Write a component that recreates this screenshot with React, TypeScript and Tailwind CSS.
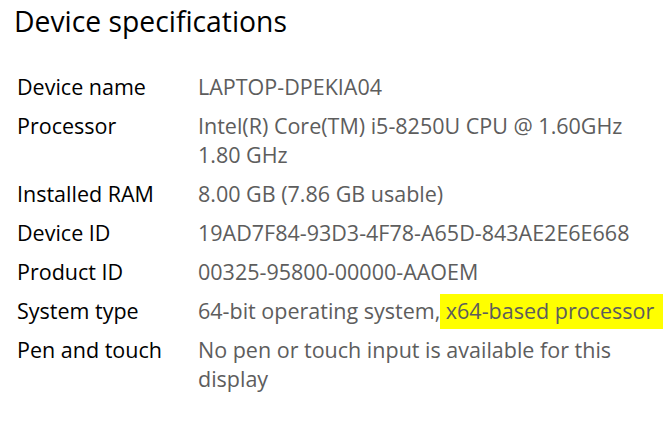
const specs: { label: string; lines: React.ReactNode[] }[] = [
  { label: 'Device name', lines: ['LAPTOP-DPEKIA04'] },
  { label: 'Processor', lines: ['Intel(R) Core(TM) i5-8250U CPU @ 1.60GHz', '1.80 GHz'] },
  { label: 'Installed RAM', lines: ['8.00 GB (7.86 GB usable)'] },
  { label: 'Device ID', lines: ['19AD7F84-93D3-4F78-A65D-843AE2E6E668'] },
  { label: 'Product ID', lines: ['00325-95800-00000-AAOEM'] },
  {
    label: 'System type',
    lines: [
      <>
        64-bit operating system,
        <span className="bg-[#ffff00] pr-[9px] pb-[4px] pt-[2px]"> x64-based processor</span>
      </>,
    ],
  },
  { label: 'Pen and touch', lines: ['No pen or touch input is available for this', 'display'] },
]

export default function App() {
  return (
    <div
      className="w-[663px] h-[421px] bg-white overflow-hidden pl-[14px] pt-[1px]"
      style={{ fontFamily: '"Segoe UI", "Open Sans", sans-serif' }}
    >
      <h1 className="text-[28.3px] leading-[40px] text-black font-normal">Device specifications</h1>

      <div className="mt-[31px] flex flex-col gap-[10px] pl-[3px]">
        {specs.map((s) => (
          <div key={s.label} className="flex text-[21.5px] leading-[29px]">
            <div className="w-[181px] shrink-0 text-black">{s.label}</div>
            <div className="text-[#5d5d5d] whitespace-nowrap">
              {s.lines.map((l, i) => (
                <div key={i}>{l}</div>
              ))}
            </div>
          </div>
        ))}
      </div>
    </div>
  )
}
